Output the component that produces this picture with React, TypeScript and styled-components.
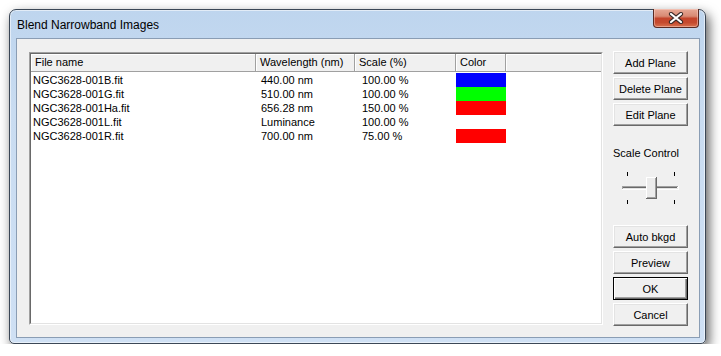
import React from "react";
import styled, { createGlobalStyle } from "styled-components";

const COLUMNS = "225px 99px 101px 50px 1fr";

const planes = [
  { file: "NGC3628-001B.fit", wave: "440.00 nm", scale: "100.00 %", color: "#0000ff" },
  { file: "NGC3628-001G.fit", wave: "510.00 nm", scale: "100.00 %", color: "#00ff00" },
  { file: "NGC3628-001Ha.fit", wave: "656.28 nm", scale: "150.00 %", color: "#ff0000" },
  { file: "NGC3628-001L.fit", wave: "Luminance", scale: "100.00 %", color: "" },
  { file: "NGC3628-001R.fit", wave: "700.00 nm", scale: "75.00 %", color: "#ff0000" },
];

export default function App() {
  return (
    <>
      <GlobalStyle />
      <SWindow>
        <STitleBar>
          <STitle>Blend Narrowband Images</STitle>
          <SClose>
            <svg width="16" height="12" viewBox="0 0 16 12">
              <path
                d="M3 2 L13 10 M13 2 L3 10"
                stroke="#3a2a28"
                strokeWidth="4.2"
                strokeLinecap="round"
              />
              <path
                d="M3 2 L13 10 M13 2 L3 10"
                stroke="#ffffff"
                strokeWidth="2.2"
                strokeLinecap="round"
              />
            </svg>
          </SClose>
        </STitleBar>

        <SClient>
          <SListOuter>
            <SListInner>
              <SHeader>
                <SHeadCell>File name</SHeadCell>
                <SHeadCell>Wavelength (nm)</SHeadCell>
                <SHeadCell>Scale (%)</SHeadCell>
                <SHeadCell>Color</SHeadCell>
                <SHeadCell />
              </SHeader>
              <SRows>
                {planes.map((p) => (
                  <SRow key={p.file}>
                    <SCell $pad={2}>{p.file}</SCell>
                    <SCell $pad={5}>{p.wave}</SCell>
                    <SCell $pad={7}>{p.scale}</SCell>
                    <SSwatch $color={p.color} />
                    <span />
                  </SRow>
                ))}
              </SRows>
            </SListInner>
          </SListOuter>

          <SSide>
            <SButtonGroup>
              <SButton>Add Plane</SButton>
              <SButton>Delete Plane</SButton>
              <SButton>Edit Plane</SButton>
            </SButtonGroup>

            <SLabel>Scale Control</SLabel>
            <SSlider width="75" height="33" viewBox="0 0 75 33">
              {/* ticks */}
              <rect x="14" y="0" width="1" height="4" fill="#000" />
              <rect x="61" y="0" width="1" height="4" fill="#000" />
              <rect x="14" y="28" width="1" height="4" fill="#000" />
              <rect x="61" y="28" width="1" height="4" fill="#000" />
              {/* track */}
              <rect x="9" y="14" width="57" height="4" fill="#ffffff" />
              <rect x="9" y="14" width="56" height="1" fill="#a0a0a0" />
              <rect x="9" y="14" width="1" height="3" fill="#a0a0a0" />
              <rect x="10" y="15" width="54" height="1" fill="#696969" />
              <rect x="10" y="16" width="55" height="1" fill="#e3e3e3" />
              {/* thumb */}
              <rect x="33" y="5" width="11" height="22" fill="#696969" />
              <rect x="33" y="5" width="10" height="21" fill="#ffffff" />
              <rect x="34" y="6" width="9" height="20" fill="#a0a0a0" />
              <rect x="34" y="6" width="8" height="19" fill="#ececec" />
            </SSlider>

            <SButtonGroup $bottom>
              <SButton>Auto bkgd</SButton>
              <SButton>Preview</SButton>
              <SButton $default>OK</SButton>
              <SButton>Cancel</SButton>
            </SButtonGroup>
          </SSide>
        </SClient>
      </SWindow>
    </>
  );
}

const GlobalStyle = createGlobalStyle`
  html, body {
    margin: 0;
    padding: 0;
    background: #ffffff;
  }
  body {
    font-family: "Liberation Sans", Arial, sans-serif;
    font-size: 11px;
    color: #000;
  }
`;

const SWindow = styled.div`
  box-sizing: border-box;
  margin: 9px 0 0 9px;
  width: 697px;
  height: 335px;
  display: flex;
  flex-direction: column;
  border: 1px solid #3b4756;
  border-radius: 7px 7px 5px 5px;
  background: linear-gradient(180deg, #bed5ee 0%, #c9dcf1 30%, #cfe0f4 100%);
  box-shadow: inset 0 0 0 1px rgba(255, 255, 255, 0.55),
    3px 5px 12px rgba(0, 0, 0, 0.65);
`;

const STitleBar = styled.div`
  height: 28px;
  display: flex;
  justify-content: space-between;
  align-items: flex-start;
  padding: 0 6px 0 7px;
`;

const STitle = styled.div`
  font-size: 12px;
  line-height: 14px;
  margin-top: 8px;
  color: #000;
`;

const SClose = styled.div`
  box-sizing: border-box;
  width: 46px;
  height: 19px;
  margin-top: -1px;
  display: flex;
  align-items: center;
  justify-content: center;
  border: 1px solid #5a2a22;
  border-top: none;
  border-radius: 0 0 4px 4px;
  background: linear-gradient(
    180deg,
    #e7a996 0%,
    #d88a74 40%,
    #c4452c 52%,
    #c54a2e 75%,
    #d8714e 100%
  );
  box-shadow: inset 0 0 0 1px rgba(255, 220, 210, 0.45);
`;

const SClient = styled.div`
  box-sizing: border-box;
  flex: 1;
  margin: 0 5px 5px 6px;
  border: 1px solid #8a9db4;
  background: #f0f0f0;
  display: flex;
  gap: 10px;
  padding: 12px 11px 11px 12px;
`;

const SListOuter = styled.div`
  box-sizing: border-box;
  width: 574px;
  margin: 1px 0;
  border: 1px solid;
  border-color: #a0a0a0 #ffffff #ffffff #a0a0a0;
  display: flex;
`;

const SListInner = styled.div`
  flex: 1;
  border: 1px solid;
  border-color: #696969 #e3e3e3 #e3e3e3 #696969;
  background: #ffffff;
  overflow: hidden;
`;

const SHeader = styled.div`
  display: grid;
  grid-template-columns: ${COLUMNS};
  height: 17px;
  border-bottom: 1px solid #a0a0a0;
`;

const SHeadCell = styled.div`
  background: #f0f0f0;
  box-shadow: inset 1px 1px 0 #ffffff;
  border-right: 1px solid #a0a0a0;
  padding-left: 4px;
  line-height: 16px;
  white-space: nowrap;
  &:last-child {
    border-right: none;
  }
`;

const SRows = styled.div`
  padding-top: 1px;
`;

const SRow = styled.div`
  display: grid;
  grid-template-columns: ${COLUMNS};
  height: 14px;
  line-height: 14px;
`;

const SCell = styled.div<{ $pad: number }>`
  padding-left: ${(p) => p.$pad}px;
  white-space: nowrap;
`;

const SSwatch = styled.div<{ $color: string }>`
  background: ${(p) => p.$color || "transparent"};
`;

const SSide = styled.div`
  width: 75px;
  display: flex;
  flex-direction: column;
`;

const SButtonGroup = styled.div<{ $bottom?: boolean }>`
  display: flex;
  flex-direction: column;
  gap: 3px;
  margin-top: ${(p) => (p.$bottom ? "auto" : "0")};
`;

const SButton = styled.button<{ $default?: boolean }>`
  box-sizing: border-box;
  width: 75px;
  height: 23px;
  padding: 0;
  font-family: "Liberation Sans", Arial, sans-serif;
  font-size: 11px;
  font-weight: 400;
  color: #000;
  background: #f0f0f0;
  border: 1px solid;
  border-color: ${(p) =>
    p.$default ? "#000000" : "#ffffff #696969 #696969 #ffffff"};
  box-shadow: ${(p) =>
    p.$default
      ? "inset 1px 1px 0 #ffffff, inset -1px -1px 0 #696969, inset -2px -2px 0 #a0a0a0"
      : "inset -1px -1px 0 #a0a0a0, inset 1px 1px 0 #e3e3e3"};
`;

const SLabel = styled.div`
  margin-top: 20px;
  line-height: 14px;
  white-space: nowrap;
`;

const SSlider = styled.svg`
  display: block;
  margin-top: 12px;
`;
